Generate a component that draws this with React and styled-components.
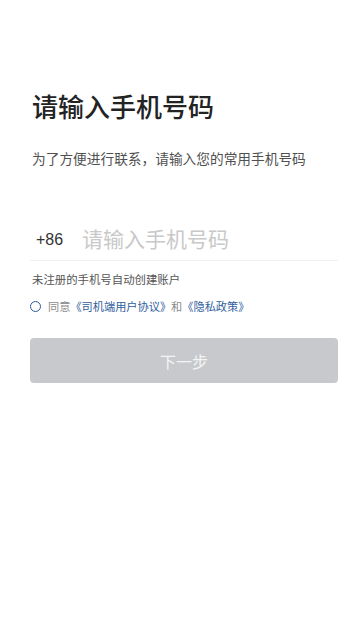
import React, { useState } from 'react';
import styled, { createGlobalStyle } from 'styled-components';

const GlobalStyle = createGlobalStyle`
  html, body {
    margin: 0;
    padding: 0;
    background: #ffffff;
  }
  body {
    font-family: "Noto Sans CJK SC", "Noto Sans", sans-serif;
  }
`;

const Page = styled.div`
  width: 360px;
  min-height: 641px;
  box-sizing: border-box;
  padding: 90px 22px 0 30px;
  background: #fff;
`;

const Title = styled.h1`
  margin: 0 0 0 2px;
  font-size: 26px;
  line-height: 32px;
  font-weight: 500;
  color: #232323;
`;

const Subtitle = styled.p`
  margin: 26px 0 0 2px;
  font-size: 13.7px;
  line-height: 20px;
  color: #505050;
`;

const PhoneRow = styled.div`
  display: flex;
  align-items: center;
  margin-top: 47px;
  height: 45px;
  padding-left: 6px;
  border-bottom: 1px solid #f0f0f0;
`;

const AreaCode = styled.span`
  font-family: "Liberation Sans", Arial, sans-serif;
  font-size: 16px;
  color: #333;
  width: 46px;
  margin-top: 4px;
`;

const PhoneInput = styled.input`
  flex: 1;
  min-width: 0;
  border: none;
  outline: none;
  padding: 0;
  background: transparent;
  font-family: "Noto Sans CJK SC", sans-serif;
  font-size: 21px;
  color: #333;
  &::placeholder {
    color: #c9c9c9;
  }
`;

const Hint = styled.p`
  margin: 10px 0 0 2px;
  font-size: 11.4px;
  line-height: 16px;
  color: #555;
`;

const AgreeRow = styled.label`
  display: flex;
  align-items: center;
  margin-top: 11px;
  font-size: 11.2px;
  line-height: 16px;
  color: #8a8a8a;
  cursor: pointer;
`;

const Radio = styled.span`
  width: 9px;
  height: 9px;
  border-radius: 50%;
  border: 1.8px solid #2b5c9c;
  background: ${p => (p.checked ? '#2b5c9c' : 'transparent')};
  margin-right: 7px;
  flex-shrink: 0;
`;

const Link = styled.span`
  color: #31609e;
`;

const NextButton = styled.button`
  display: block;
  width: 308px;
  height: 45px;
  margin-top: 24px;
  border: none;
  border-radius: 4px;
  background: #c8c9cc;
  color: #f4f4f4;
  font-family: "Noto Sans CJK SC", sans-serif;
  font-size: 16px;
`;

export default function App() {
  const [agreed, setAgreed] = useState(false);
  return (
    <Page>
      <GlobalStyle />
      <Title>请输入手机号码</Title>
      <Subtitle>为了方便进行联系，请输入您的常用手机号码</Subtitle>
      <PhoneRow>
        <AreaCode>+86</AreaCode>
        <PhoneInput type="tel" placeholder="请输入手机号码" />
      </PhoneRow>
      <Hint>未注册的手机号自动创建账户</Hint>
      <AgreeRow onClick={() => setAgreed(!agreed)}>
        <Radio checked={agreed} />
        同意<Link>《司机端用户协议》</Link>和<Link>《隐私政策》</Link>
      </AgreeRow>
      <NextButton disabled>下一步</NextButton>
    </Page>
  );
}
